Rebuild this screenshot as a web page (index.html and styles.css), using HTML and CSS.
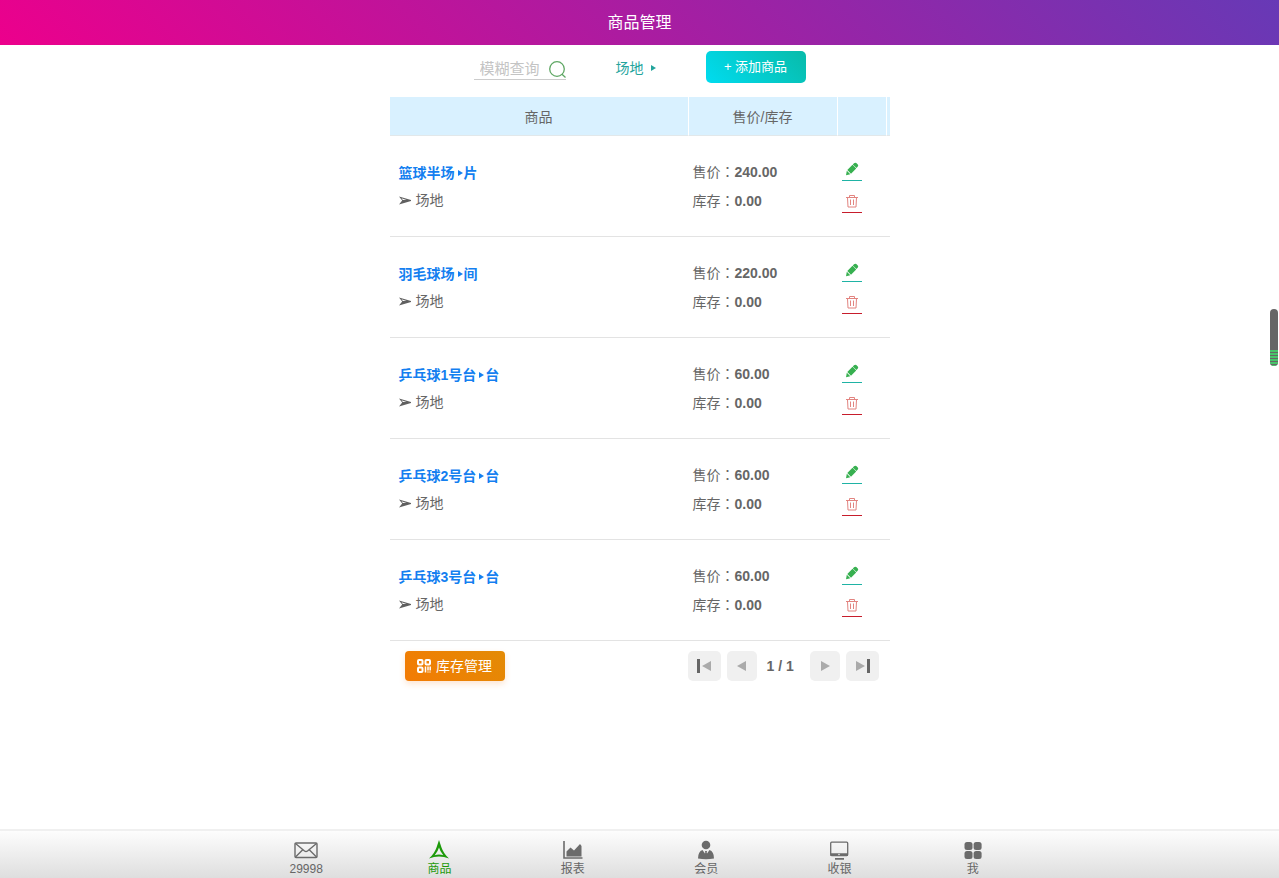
FILE: index.html
```html
<!DOCTYPE html>
<html lang="zh-CN">
<head>
<meta charset="utf-8">
<meta name="viewport" content="width=device-width, initial-scale=1">
<title>商品管理</title>
<link rel="stylesheet" href="styles.css">
</head>
<body>
<svg class="defs" aria-hidden="true">
  <symbol id="pen" viewBox="0 0 14 14"><path d="M9 1.300q1.300-1.100 2.300-.2l1.500 1.400q.9 1 0 2L11.500 6 7.800 2.500zM7.500 2.800l3.700 3.600-5.200 5.400-3.700-3.700zM1.800 8.800l3.500 3.500-4.300 1z" fill="#37b050"/></symbol>
  <symbol id="trash" viewBox="0 0 14 14"><path d="M1 3.500h12M4.500 3.500v-2h5v2M2.500 3.500l.5 9.500h8l.5-9.500M5.500 5.500v5.500M8.500 5.500v5.500" fill="none" stroke="#e28480"/></symbol>
  <symbol id="tri" viewBox="0 0 5 6"><path d="M0 0l5 3-5 3z" fill="currentColor"/></symbol>
  <symbol id="arrow" viewBox="0 0 12 10"><path d="M0 .5l12 3.500v1L0 8.500l3.200-4z" fill="#606060"/><path d="M2.500 2.300l5 1.600H3.800z" fill="#fff"/></symbol>
</svg>
<header class="topbar"><h1 class="topbar-title">商品管理</h1></header>
<main class="page">
  <form class="toolbar">
    <div class="search">
      <input class="search-input" type="text" placeholder="模糊查询" aria-label="模糊查询">
      <button class="search-button" type="button" aria-label="查询"><svg width="18" height="18" viewBox="0 0 18 18" fill="none" stroke="#5fa764" stroke-width="1.300"><circle cx="8" cy="9" r="7.300"/><path d="M13 14.200l3.500 3.300"/></svg></button>
    </div>
    <a class="category" href="#">场地<svg class="tri"><use href="#tri"/></svg></a>
    <button class="add" type="button">+ 添加商品</button>
  </form>
  <table class="goods">
    <colgroup><col><col class="col-price"><col class="col-act"><col class="col-end"></colgroup>
    <thead><tr><th>商品</th><th>售价/库存</th><th></th><th></th></tr></thead>
    <tbody>
      <tr>
        <td><a class="name" href="#">篮球半场<svg class="tri"><use href="#tri"/></svg>片</a><div class="kind"><svg class="arrow"><use href="#arrow"/></svg>场地</div></td>
        <td><div class="amount">售价<span class="colon" lang="zh-TW">：</span><b>240.00</b></div><div class="amount">库存<span class="colon" lang="zh-TW">：</span><b>0.00</b></div></td>
        <td colspan="2"><button class="act edit" type="button" aria-label="编辑"><svg class="icon"><use href="#pen"/></svg></button><button class="act remove" type="button" aria-label="删除"><svg class="icon"><use href="#trash"/></svg></button></td>
      </tr>
      <tr>
        <td><a class="name" href="#">羽毛球场<svg class="tri"><use href="#tri"/></svg>间</a><div class="kind"><svg class="arrow"><use href="#arrow"/></svg>场地</div></td>
        <td><div class="amount">售价<span class="colon" lang="zh-TW">：</span><b>220.00</b></div><div class="amount">库存<span class="colon" lang="zh-TW">：</span><b>0.00</b></div></td>
        <td colspan="2"><button class="act edit" type="button" aria-label="编辑"><svg class="icon"><use href="#pen"/></svg></button><button class="act remove" type="button" aria-label="删除"><svg class="icon"><use href="#trash"/></svg></button></td>
      </tr>
      <tr>
        <td><a class="name" href="#">乒乓球1号台<svg class="tri"><use href="#tri"/></svg>台</a><div class="kind"><svg class="arrow"><use href="#arrow"/></svg>场地</div></td>
        <td><div class="amount">售价<span class="colon" lang="zh-TW">：</span><b>60.00</b></div><div class="amount">库存<span class="colon" lang="zh-TW">：</span><b>0.00</b></div></td>
        <td colspan="2"><button class="act edit" type="button" aria-label="编辑"><svg class="icon"><use href="#pen"/></svg></button><button class="act remove" type="button" aria-label="删除"><svg class="icon"><use href="#trash"/></svg></button></td>
      </tr>
      <tr>
        <td><a class="name" href="#">乒乓球2号台<svg class="tri"><use href="#tri"/></svg>台</a><div class="kind"><svg class="arrow"><use href="#arrow"/></svg>场地</div></td>
        <td><div class="amount">售价<span class="colon" lang="zh-TW">：</span><b>60.00</b></div><div class="amount">库存<span class="colon" lang="zh-TW">：</span><b>0.00</b></div></td>
        <td colspan="2"><button class="act edit" type="button" aria-label="编辑"><svg class="icon"><use href="#pen"/></svg></button><button class="act remove" type="button" aria-label="删除"><svg class="icon"><use href="#trash"/></svg></button></td>
      </tr>
      <tr>
        <td><a class="name" href="#">乒乓球3号台<svg class="tri"><use href="#tri"/></svg>台</a><div class="kind"><svg class="arrow"><use href="#arrow"/></svg>场地</div></td>
        <td><div class="amount">售价<span class="colon" lang="zh-TW">：</span><b>60.00</b></div><div class="amount">库存<span class="colon" lang="zh-TW">：</span><b>0.00</b></div></td>
        <td colspan="2"><button class="act edit" type="button" aria-label="编辑"><svg class="icon"><use href="#pen"/></svg></button><button class="act remove" type="button" aria-label="删除"><svg class="icon"><use href="#trash"/></svg></button></td>
      </tr>
    </tbody>
  </table>
  <div class="footer">
    <button class="stock" type="button"><svg width="14" height="14" viewBox="0 0 14 14" fill="none" stroke="#fff" stroke-width="2"><rect x="1" y="1" width="4.500" height="4.500" rx="1"/><rect x="8.500" y="1" width="4.500" height="4.500" rx="1"/><rect x="1" y="8.500" width="4.500" height="4.500" rx="1"/><path d="M8.500 7.500v6M11 7.500v4M13.200 7.500v4" stroke-width="1.500"/><path d="M10 13h4" stroke-width="1" opacity=".7"/></svg>库存管理</button>
    <nav class="pager" aria-label="分页">
      <button class="pg wide" type="button" aria-label="首页"><svg width="15" height="14" viewBox="0 0 15 14"><path d="M0 0h3v14H0z" fill="#666"/><path d="M14 2v10L5 7z" fill="#aaa"/></svg></button>
      <button class="pg" type="button" aria-label="上一页"><svg width="10" height="12" viewBox="0 0 10 12"><path d="M9 1v10L0 6z" fill="#aaa"/></svg></button>
      <span class="count">1 / 1</span>
      <button class="pg" type="button" aria-label="下一页"><svg width="10" height="12" viewBox="0 0 10 12"><path d="M1 1v10l9-5z" fill="#aaa"/></svg></button>
      <button class="pg wide" type="button" aria-label="末页"><svg width="15" height="14" viewBox="0 0 15 14"><path d="M12 0h3v14h-3z" fill="#666"/><path d="M1 2v10l9-5z" fill="#aaa"/></svg></button>
    </nav>
  </div>
</main>
<div class="meter"><div class="meter-fill"></div></div>
<nav class="tabs" aria-label="主导航">
  <div class="tabs-inner">
    <a class="tab" href="#"><svg width="24" height="20" viewBox="0 0 24 20" fill="none" stroke="#6b6b6b" stroke-width="1.400"><rect x="1" y="3" width="22" height="14.500" rx="1"/><path d="M1.500 3.500l9 7.500q1.500 1 3 0l9-7.500M1.500 17l7-7M22.500 17l-7-7"/></svg>29998</a>
    <a class="tab active" href="#"><svg width="22" height="20" viewBox="0 0 22 20"><path fill="#1d9a0a" fill-rule="evenodd" d="M11 0l2.500 7.500q2 6 7.500 11-5-2-10-2T1 18.500q5.500-5 7.500-11zM11 7.500q-1 3.800-4.300 7.700 4.300-1.600 8.600 0Q12 11.300 11 7.500z"/></svg>商品</a>
    <a class="tab" href="#"><svg width="20" height="20" viewBox="0 0 20 20"><path d="M1 1v17h18.500" fill="none" stroke="#6b6b6b" stroke-width="1.600"/><path d="M3.500 16.500v-5l4-4 3.500 3 6-6.500 1.500 2v10.500z" fill="#6b6b6b"/></svg>报表</a>
    <a class="tab" href="#"><svg width="18" height="20" viewBox="0 0 18 20" fill="#6b6b6b"><circle cx="9" cy="5" r="4.300"/><path d="M1 18.500q0-7 4.500-8.500L9 15l3.500-5Q17 11.500 17 18.500q-8 1.500-16 0z"/><path d="M8 11h2l-.3 1.500.5 2L9 16l-1.200-1.500.5-2z"/></svg>会员</a>
    <a class="tab" href="#"><svg width="20" height="20" viewBox="0 0 20 20"><rect x="1.700" y="2.200" width="17" height="13.300" rx="1" fill="none" stroke="#6b6b6b" stroke-width="1.300"/><path d="M1.500 13.200h17.500v2.800h-17.500zM6 18h9v1.700H6z" fill="#6b6b6b"/><circle cx="10" cy="14.500" r=".7" fill="#fff"/></svg>收银</a>
    <a class="tab" href="#"><svg width="18" height="20" viewBox="0 0 18 20" fill="#6b6b6b"><rect x=".500" y="2" width="8" height="8" rx="2.500"/><rect x="9.600" y="2" width="8" height="8" rx="2.500"/><rect x=".500" y="11" width="8" height="8" rx="2.500"/><rect x="9.600" y="11" width="8" height="8" rx="2.500"/></svg>我</a>
  </div>
</nav>
</body>
</html>
```

FILE: styles.css
```css
* { box-sizing: border-box; }
body {
  margin: 0;
  min-height: 100vh;
  display: flex;
  flex-direction: column;
  background: #fff;
  color: #666;
  font: 14px/20px "Liberation Sans", "Noto Sans CJK SC", sans-serif;
}
button, input { font: inherit; color: inherit; border: 0; padding: 0; background: none; }
button { cursor: pointer; }
a { color: inherit; text-decoration: none; }
svg { flex: none; }
.defs { position: absolute; width: 0; height: 0; }
.topbar {
  height: 45px;
  display: flex;
  align-items: center;
  justify-content: center;
  background: linear-gradient(45deg, #ec008c, #6739b6);
}
.topbar-title { margin: 0; color: #fff; font-size: 16px; font-weight: 400; }
.page { flex: 1; width: 100%; max-width: 500px; margin: 0 auto; }
.toolbar {
  display: flex;
  align-items: center;
  justify-content: center;
  height: 52px;
  padding-bottom: 8px;
}
.search {
  display: flex;
  align-items: center;
  width: 92px;
  height: 22px;
  margin: 4px 50px 0 0;
  border-bottom: 1px solid #ccc;
}
.search-input { width: 75px; padding-left: 6px; font-size: 15px; height: 21px; outline: 0; }
.search-input::placeholder { color: #c4c4c4; }
.search-button { display: flex; }
.category { display: flex; align-items: center; width: 90px; padding-top: 2px; color: #23a49c; }
.tri { width: 5px; height: 6px; margin: 0 1px 0 3px; }
.category .tri { margin-left: 7px; }
.add {
  width: 100px;
  height: 32px;
  border-radius: 5px;
  color: #fff;
  font-size: 13px;
  background: linear-gradient(45deg, #00dcf0, #08bba9);
}
.goods { width: 100%; table-layout: fixed; border-collapse: separate; border-spacing: 0; }
.col-price { width: 149px; }
.col-act { width: 49px; }
.col-end { width: 3px; }
.goods th {
  height: 39px;
  padding: 2px 0 0;
  font-weight: 400;
  background: #d9f1ff;
  border-right: 1px solid #fff;
  border-bottom: 1px solid #e2e8ea;
}
.goods th:last-child { border-right: 0; }
.goods td { height: 101px; padding: 22px 4px 20px; vertical-align: top; border-bottom: 1px solid #e3e3e3; }
.goods td:first-child { padding: 23px 9px 20px; }
.name { display: block; line-height: 28px; color: #147ff0; font-weight: 700; }
.name .tri { vertical-align: 2px; }
.kind { display: flex; align-items: center; gap: 5px; line-height: 27px; }
.arrow { width: 12px; height: 10px; }
.amount { line-height: 29px; }
.colon { font-family: "Noto Sans CJK TC", sans-serif; line-height: 1; }
.act { display: flex; align-items: center; justify-content: center; width: 20px; height: 23px; border-bottom: 1px solid; }
.act + .act { margin-top: 9px; }
.icon { width: 14px; height: 14px; }
.edit { border-color: #1fb3a5; }
.remove { border-color: #c71d2c; }
.footer { display: flex; align-items: center; justify-content: space-between; padding: 10px 11px 10px 15px; }
.stock {
  display: flex;
  align-items: center;
  justify-content: center;
  gap: 5px;
  width: 100px;
  height: 30px;
  border-radius: 4px;
  color: #fff;
  background: linear-gradient(45deg, #f37b04, #e38b05);
  box-shadow: 0 3px 6px rgba(243, 123, 29, .2);
}
.pager { display: flex; align-items: center; gap: 6px; }
.pg { display: flex; align-items: center; justify-content: center; width: 30px; height: 30px; border-radius: 5px; background: #f0f0f0; }
.wide { width: 33px; }
.count { width: 41px; font-weight: 700; padding-left: 4px; white-space: nowrap; }
.meter {
  position: fixed;
  right: 1px;
  top: 309px;
  width: 8px;
  height: 57px;
  display: flex;
  align-items: flex-end;
  overflow: hidden;
  border-radius: 4px;
  background: #666;
}
.meter-fill { width: 100%; height: 16px; background: repeating-linear-gradient(#48c46a 0 2px, #666 2px 3px); }
.tabs {
  height: 49px;
  border-top: 2px solid #f0f0f0;
  background: linear-gradient(#fdfdfd, #dedede);
}
.tabs-inner { display: flex; max-width: 800px; margin: 0 auto; }
.tab {
  flex: 1;
  display: flex;
  flex-direction: column;
  align-items: center;
  gap: 1px;
  padding-top: 9px;
  font-size: 12px;
  line-height: 16px;
}
.active { color: #1d9a0a; }
```
